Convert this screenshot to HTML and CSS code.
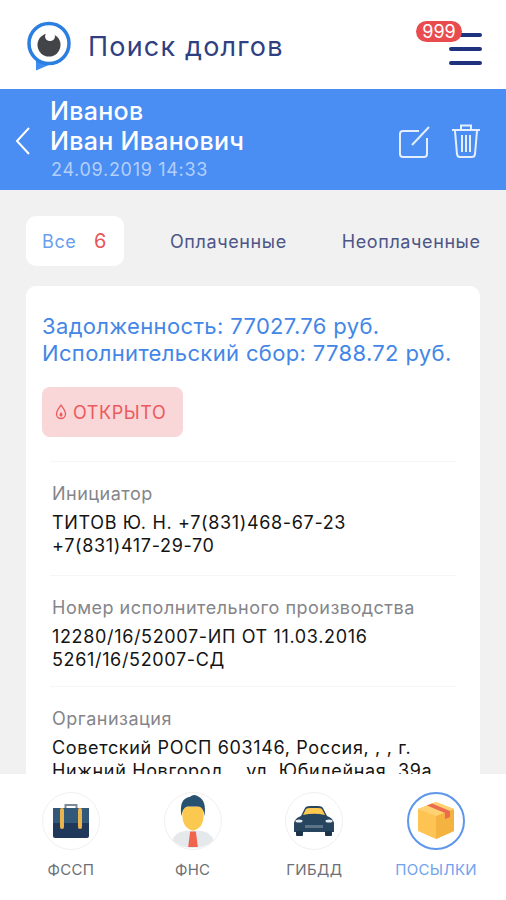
FILE: index.html
```html
<!DOCTYPE html>
<html lang="ru">
<head>
    <meta charset="UTF-8">
    <meta name="viewport" content="width=device-width, initial-scale=1.0">
    <title>Поиск долгов</title>
    <link rel="stylesheet" href="styles.css">
</head>
<body>
    <div class="app">
        <!-- Шапка -->
        <header class="top-bar">
            <svg class="logo" width="48" height="52" viewBox="0 0 48 52">
                <path d="M11 38 L11 50.500 L25 44.500 Z" fill="#3f8cf0"/>
                <circle cx="24" cy="23.500" r="20" fill="#fff" stroke="#2a7fe0" stroke-width="3.500"/>
                <circle cx="24" cy="25" r="11.500" fill="#424448"/>
                <ellipse cx="25" cy="16.500" rx="5" ry="4.500" fill="#fff"/>
            </svg>
            <div class="app-title">Поиск долгов</div>
            <div class="menu">
                <span class="menu-line"></span>
                <span class="menu-line"></span>
                <span class="menu-line"></span>
                <span class="menu-badge">999</span>
            </div>
        </header>

        <!-- Синяя полоса -->
        <section class="person-bar">
            <svg class="back" width="18" height="30" viewBox="0 0 18 30">
                <path d="M15 2 L3 15 L15 28" fill="none" stroke="#fff" stroke-width="2"/>
            </svg>
            <div class="person">
                <div class="person-name">Иванов<br>Иван Иванович</div>
                <div class="person-date">24.09.2019 14:33</div>
            </div>
            <svg class="action" width="34" height="36" viewBox="0 0 34 36">
                <path d="M21 8 H5 Q2 8 2 11 V31 Q2 34 5 34 H26 Q29 34 29 31 V15" fill="none" stroke="#e4eefe" stroke-width="2"/>
                <path d="M14 22 L31 4" fill="none" stroke="#e4eefe" stroke-width="2"/>
            </svg>
            <svg class="action" width="32" height="36" viewBox="0 0 32 36">
                <path d="M2 7 H30 M11 6 V2.500 H21 V6" fill="none" stroke="#e4eefe" stroke-width="2"/>
                <path d="M5 8 L7 31 Q7.500 34 10 34 H22 Q24.500 34 25 31 L27 8 M12 12 V29 M16 12 V29 M20 12 V29" fill="none" stroke="#e4eefe" stroke-width="2"/>
            </svg>
        </section>

        <main class="content">
            <div class="tabs">
                <div class="tab tab-active">Все <span class="tab-count">6</span></div>
                <div class="tab">Оплаченные</div>
                <div class="tab">Неоплаченные</div>
            </div>

            <div class="card">
                <div class="debt">Задолженность: 77027.76 руб.<br>Исполнительский сбор: 7788.72 руб.</div>
                <div class="status">
                    <svg width="12" height="16" viewBox="0 0 12 16">
                        <path d="M6 1 C4 4 1.500 6.500 1.500 10 A4.500 4.500 0 0 0 10.500 10 C10.500 6.500 8 4 6 1 Z" fill="none" stroke="#ec5a5e" stroke-width="1.300"/>
                        <path d="M6 8 C5 9.500 4.500 10 4.500 11 A1.500 1.500 0 0 0 7.500 11 C7.500 10 7 9.500 6 8 Z" fill="#ec5a5e"/>
                    </svg>
                    ОТКРЫТО
                </div>
                <div class="info">
                    <div class="info-label">Инициатор</div>
                    <div class="info-value">ТИТОВ Ю. Н. +7(831)468-67-23<br>+7(831)417-29-70</div>
                </div>
                <div class="info info-short">
                    <div class="info-label">Номер исполнительного производства</div>
                    <div class="info-value">12280/16/52007-ИП ОТ 11.03.2016<br>5261/16/52007-СД</div>
                </div>
                <div class="info">
                    <div class="info-label">Организация</div>
                    <div class="info-value">Советский РОСП 603146, Россия, , , г.<br>Нижний Новгород, , ул. Юбилейная, 39а,</div>
                </div>
            </div>
        </main>

        <!-- Нижнее меню -->
        <nav class="bottom-nav">
            <div class="nav-item">
                <div class="nav-icon">
                    <svg width="36" height="34" viewBox="0 0 36 34">
                        <path d="M12.500 7 V1 H23.500 V7" fill="none" stroke="#7c8a99" stroke-width="2"/>
                        <rect x="0" y="4" width="36" height="30" rx="2" fill="#20395a"/>
                        <rect x="0" y="4" width="36" height="15" fill="#32587a"/>
                        <rect x="7" y="4" width="4" height="21" rx="2" fill="#e9b44c"/>
                        <rect x="25" y="4" width="4" height="21" rx="2" fill="#e9b44c"/>
                    </svg>
                </div>
                <div class="nav-label">ФССП</div>
            </div>
            <div class="nav-item">
                <div class="nav-icon">
                    <svg width="58" height="58" viewBox="0 0 58 58">
                        <path d="M7 50 Q9 41 21 39 H37 Q49 41 51 50 Q41 57 29 57 Q17 57 7 50 Z" fill="#e6e9ec"/>
                        <path d="M26 40 H32 L34 56 H24 Z" fill="#f0644e"/>
                        <path d="M18 14 H40 V24 Q40 36 29 39 Q18 36 18 24 Z" fill="#fbc94f"/>
                        <path d="M17 24 Q14 6 26 4 Q30 0 35 4 Q43 8 41 24 Q40 14 34 14 H23 Q18 15 17 24 Z" fill="#28506f"/>
                    </svg>
                </div>
                <div class="nav-label">ФНС</div>
            </div>
            <div class="nav-item">
                <div class="nav-icon">
                    <svg width="44" height="32" viewBox="0 0 44 32">
                        <path d="M2 18 Q3 13 9 11 L13 3 Q14 1 18 1 H26 Q30 1 31 3 L35 11 Q41 13 42 18 V27 H2 Z" fill="#284560"/>
                        <path d="M11 10 L14 4 Q15 3 18 3 H26 Q29 3 30 4 L33 10 Q22 7.500 11 10 Z" fill="#fbc94f"/>
                        <rect x="4" y="26" width="7" height="5" rx="1" fill="#1d3349"/>
                        <rect x="33" y="26" width="7" height="5" rx="1" fill="#1d3349"/>
                        <ellipse cx="7" cy="16" rx="3.500" ry="1.500" fill="#e6edf2"/>
                        <ellipse cx="37" cy="16" rx="3.500" ry="1.500" fill="#e6edf2"/>
                        <rect x="13" y="20" width="18" height="3" fill="#5d7387"/>
                    </svg>
                </div>
                <div class="nav-label">ГИБДД</div>
            </div>
            <div class="nav-item nav-item-active">
                <div class="nav-icon">
                    <svg width="36" height="38" viewBox="0 0 36 38">
                        <path d="M18 0 L36 7 V29 L18 37 L0 29 V7 Z" fill="#fdc453"/>
                        <path d="M18 14 L36 7 V29 L18 37 Z" fill="#f4b240"/>
                        <path d="M18 0 L36 7 L18 14 L0 7 Z" fill="#fed272"/>
                        <path d="M9 3.500 L27 11 V17 L32 15 V9 L14 1.500 Z" fill="#ec6a4e"/>
                    </svg>
                </div>
                <div class="nav-label">ПОСЫЛКИ</div>
            </div>
        </nav>
    </div>
</body>
</html>
```

FILE: styles.css
```css
* {
    box-sizing: border-box;
}
html, body {
    margin: 0;
    padding: 0;
    height: 100%;
    overflow: hidden;
}
body {
    font-family: "Inter", "Liberation Sans", sans-serif;
    background-color: #f1f1f1;
}
.app {
    height: 900px;
    display: flex;
    flex-direction: column;
}
.top-bar {
    height: 89px;
    flex-shrink: 0;
    background-color: #ffffff;
    display: flex;
    align-items: center;
    padding: 0 24px 0 25px;
}
.logo {
    margin-top: 2px;
}
.app-title {
    font-size: 27px;
    color: #2f3f82;
    margin-left: 15px;
    margin-top: 3px;
    letter-spacing: 1.2px;
    flex: 1;
}
.menu {
    position: relative;
    width: 33px;
    display: flex;
    flex-direction: column;
    gap: 10px;
    margin-top: 8px;
}
.menu-line {
    height: 4px;
    border-radius: 2px;
    background-color: #1f3280;
}
.menu-badge {
    position: absolute;
    top: -12px;
    left: -33px;
    width: 46px;
    height: 21px;
    border-radius: 11px;
    background-color: #e84c4f;
    color: #ffffff;
    font-size: 18px;
    line-height: 21px;
    text-align: center;
}
.person-bar {
    height: 101px;
    flex-shrink: 0;
    background-color: #4a8df3;
    display: flex;
    align-items: center;
    padding: 0 24px 0 14px;
}
.back {
    flex-shrink: 0;
    margin-top: 2px;
}
.person {
    flex: 1;
    margin-left: 18px;
}
.person-name {
    font-size: 25px;
    line-height: 30px;
    font-weight: 500;
    letter-spacing: 0.3px;
    color: #ffffff;
}
.person-date {
    font-size: 18px;
    line-height: 28px;
    letter-spacing: 0.7px;
    color: #b4d0fa;
    margin-left: 1px;
}
.action {
    margin-left: 18px;
    margin-top: 2px;
}
.content {
    flex: 1;
    min-height: 0;
    overflow: hidden;
    padding: 26px 26px 0;
}
.tabs {
    display: flex;
    align-items: center;
    height: 50px;
}
.tab {
    font-size: 18px;
    letter-spacing: 0.6px;
    color: #4d5587;
    white-space: nowrap;
    margin-left: 46px;
    flex-shrink: 0;
}
.tab:last-child {
    margin-left: 55px;
}
.tab-active {
    width: 98px;
    height: 50px;
    margin-left: 0;
    padding-left: 16px;
    line-height: 50px;
    background-color: #ffffff;
    border-radius: 10px;
    color: #6a9ff0;
}
.tab-count {
    color: #e8565a;
    font-size: 20px;
    margin-left: 12px;
}
.card {
    margin-top: 20px;
    height: 600px;
    background-color: #ffffff;
    border-radius: 10px;
    padding: 27px 16px 0;
}
.debt {
    font-size: 22px;
    line-height: 27px;
    letter-spacing: 0.35px;
    color: #4486e6;
}
.status {
    margin-top: 20px;
    margin-bottom: 24px;
    width: 141px;
    height: 50px;
    background-color: #f9d6d7;
    border-radius: 8px;
    display: flex;
    align-items: center;
    gap: 6px;
    padding-left: 13px;
    font-size: 18px;
    letter-spacing: 0.6px;
    color: #ec5a5e;
}
.info {
    margin: 0 8px;
    padding: 21px 2px 18px;
    border-top: 1px solid #f6f6f6;
}
.info-short {
    padding-bottom: 15px;
}
.info-label {
    font-size: 18px;
    line-height: 22px;
    letter-spacing: 0.5px;
    color: #85858a;
}
.info-value {
    font-size: 18px;
    line-height: 23px;
    letter-spacing: 0.65px;
    color: #141414;
    margin-top: 6px;
    white-space: nowrap;
}
.bottom-nav {
    height: 126px;
    flex-shrink: 0;
    background-color: #ffffff;
    display: flex;
    padding: 18px 9px 0 10px;
    position: relative;
}
.nav-item {
    flex: 1;
    display: flex;
    flex-direction: column;
    align-items: center;
}
.nav-icon {
    width: 58px;
    height: 58px;
    border-radius: 50%;
    border: 1px solid #f0f0f0;
    display: flex;
    align-items: center;
    justify-content: center;
    overflow: hidden;
}
.nav-item-active .nav-icon {
    border: 2px solid #5e96ec;
}
.nav-label {
    font-size: 15px;
    letter-spacing: 0.3px;
    color: #6c7075;
    margin-top: 10px;
}
.nav-item-active .nav-label {
    color: #6fa3f0;
}
```
